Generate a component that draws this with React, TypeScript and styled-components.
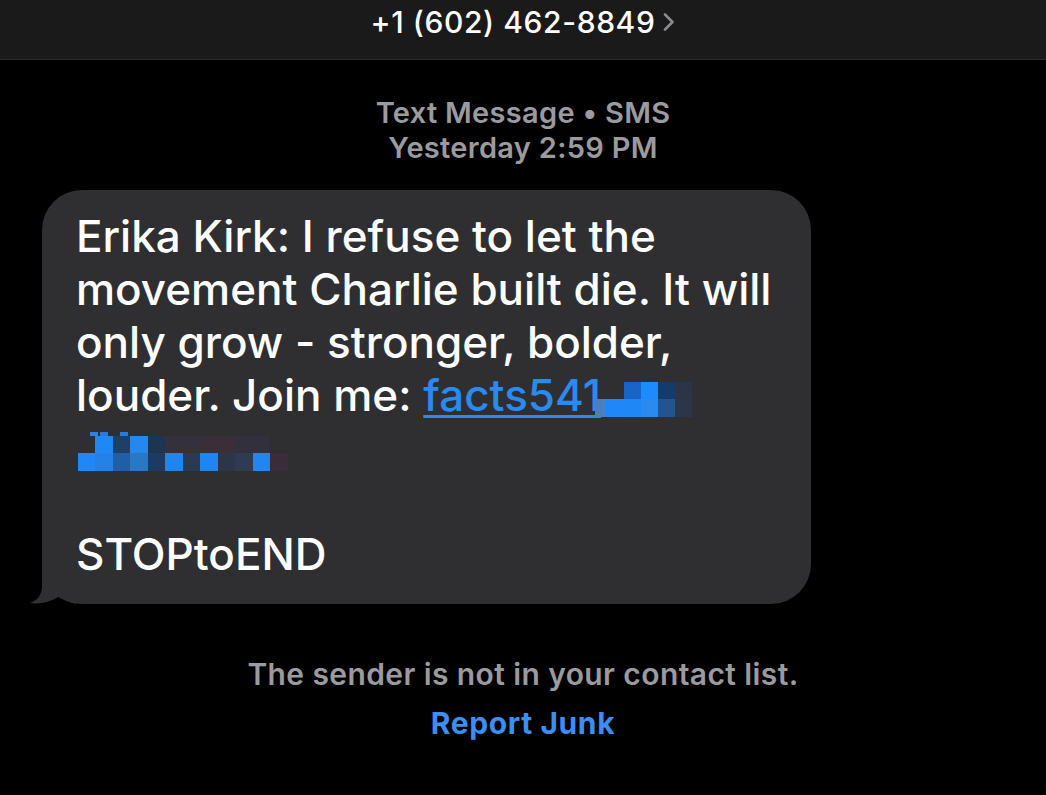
import React from "react";
import styled, { createGlobalStyle } from "styled-components";

const GlobalStyle = createGlobalStyle`
  html, body { margin: 0; padding: 0; background: #000; }
  body { font-family: Inter, "Noto Sans", "Liberation Sans", sans-serif; -webkit-font-smoothing: antialiased; }
`;

const Page = styled.div`
  width: 1046px;
  height: 795px;
  background: #000;
  display: flex;
  flex-direction: column;
  overflow: hidden;
`;

const Header = styled.header`
  height: 60px;
  background: #1a1a1a;
  border-bottom: 1px solid #2c2c2c;
  display: flex;
  justify-content: center;
  align-items: flex-start;
  padding-top: 3px;
  box-sizing: border-box;
`;

const Title = styled.div`
  display: flex;
  align-items: center;
  gap: 8px;
  color: #fff;
  font-size: 30px;
  font-weight: 500;
  letter-spacing: 0.6px;
  line-height: 38px;
`;

const Stamp = styled.div`
  margin-top: 35px;
  text-align: center;
  color: #9a9a9f;
  font-size: 29px;
  font-weight: 600;
  line-height: 35px;
  letter-spacing: 0.3px;
`;

const Bubble = styled.div`
  position: relative;
  margin: 25px 0 0 42px;
  width: 769px;
  box-sizing: border-box;
  padding: 20px 30px 23px 34px;
  background: #2f2f31;
  border-radius: 40px;
  color: #fff;
  font-size: 44px;
  font-weight: 500;
`;

const Line = styled.div`
  height: 53px;
  line-height: 53px;
  white-space: nowrap;
  display: flex;
  align-items: center;
`;

const Link = styled.span`
  color: #2a8af0;
  text-decoration: underline;
  text-decoration-thickness: 3px;
  text-underline-offset: 4px;
`;

const Tail = styled.svg`
  position: absolute;
  left: -14px;
  bottom: 0;
`;

const Notice = styled.div`
  margin-top: 53px;
  text-align: center;
  color: #9a9a9f;
  font-size: 30px;
  font-weight: 600;
  line-height: 35px;
  letter-spacing: 0.4px;
`;

const Action = styled.div`
  margin-top: 14px;
  text-align: center;
  color: #3b8ef2;
  font-size: 30px;
  font-weight: 700;
  line-height: 35px;
  letter-spacing: 0.6px;
`;

type Cell = [number, number, number, number, string];

const mosaicA: Cell[] = [
  [29, 0, 17, 17, "#1a64c8"],
  [46, 0, 17, 17, "#1c8bff"],
  [63, 0, 17, 17, "#163b6a"],
  [80, 0, 17, 17, "#2b3545"],
  [0, 17, 10, 18, "#4a7fc0"],
  [10, 17, 54, 18, "#1f88f6"],
  [46, 17, 17, 18, "#2a8af0"],
  [63, 17, 17, 18, "#24548e"],
  [80, 17, 17, 18, "#2c3646"],
];

const mosaicB: Cell[] = [
  [12, 0, 8, 4, "#2a84e8"],
  [22, 0, 8, 4, "#2a7ad8"],
  [42, 0, 8, 4, "#2a7ad8"],
  [17, 4, 18, 17, "#1e88f5"],
  [35, 4, 17, 17, "#1f3f66"],
  [52, 4, 18, 17, "#2489ee"],
  [70, 4, 17, 17, "#1d3452"],
  [87, 4, 35, 17, "#34303c"],
  [122, 4, 35, 17, "#3a2f38"],
  [157, 4, 35, 17, "#33303e"],
  [0, 21, 17, 18, "#1f88f8"],
  [17, 21, 18, 18, "#2381e8"],
  [35, 21, 17, 18, "#1f5fa8"],
  [52, 21, 18, 18, "#2a77c6"],
  [70, 21, 17, 18, "#1c3a62"],
  [87, 21, 18, 18, "#1f85f0"],
  [105, 21, 17, 18, "#2b3a52"],
  [122, 21, 18, 18, "#1e86f2"],
  [140, 21, 17, 18, "#2d3648"],
  [157, 21, 18, 18, "#303a52"],
  [175, 21, 17, 18, "#1f86f4"],
  [192, 21, 18, 18, "#3a2c38"],
];

const Mosaic: React.FC<{ cells: Cell[]; w: number; h: number; className?: string }> = ({ cells, w, h, className }) => (
  <svg className={className} width={w} height={h} viewBox={`0 0 ${w} ${h}`}>
    {cells.map(([x, y, cw, ch, c], i) => (
      <rect key={i} x={x} y={y} width={cw} height={ch} fill={c} />
    ))}
  </svg>
);

const InlineMosaic = styled(Mosaic)`
  margin-left: -6px;
  margin-top: 8px;
  flex: none;
`;

const BlockMosaic = styled(Mosaic)`
  margin-left: 2px;
  margin-top: 6px;
  flex: none;
`;

export default function App() {
  return (
    <Page>
      <GlobalStyle />
      <Header>
        <Title>
          +1 (602) 462-8849
          <svg width="12" height="18" viewBox="0 0 12 18">
            <polyline points="2,1.5 9.5,9 2,16.5" fill="none" stroke="#8a8a8e" strokeWidth="2.6" strokeLinecap="round" strokeLinejoin="round" />
          </svg>
        </Title>
      </Header>
      <Stamp>
        Text Message • SMS
        <br />
        Yesterday 2:59 PM
      </Stamp>
      <Bubble>
        <Line>Erika Kirk: I refuse to let the</Line>
        <Line>movement Charlie built die. It will</Line>
        <Line>only grow - stronger, bolder,</Line>
        <Line>
          louder. Join me:&nbsp;<Link>facts541</Link>
          <InlineMosaic cells={mosaicA} w={97} h={35} />
        </Line>
        <Line>
          <BlockMosaic cells={mosaicB} w={210} h={39} />
        </Line>
        <Line />
        <Line>STOPtoEND</Line>
        <Tail width="50" height="44" viewBox="0 0 50 44">
          <path d="M14 0 L14 26 C14 34 10 40 2 43 C12 44.5 22 42 30 37 C34 39 40 42 48 44 L48 0 Z" fill="#2f2f31" />
        </Tail>
      </Bubble>
      <Notice>The sender is not in your contact list.</Notice>
      <Action>Report Junk</Action>
    </Page>
  );
}
